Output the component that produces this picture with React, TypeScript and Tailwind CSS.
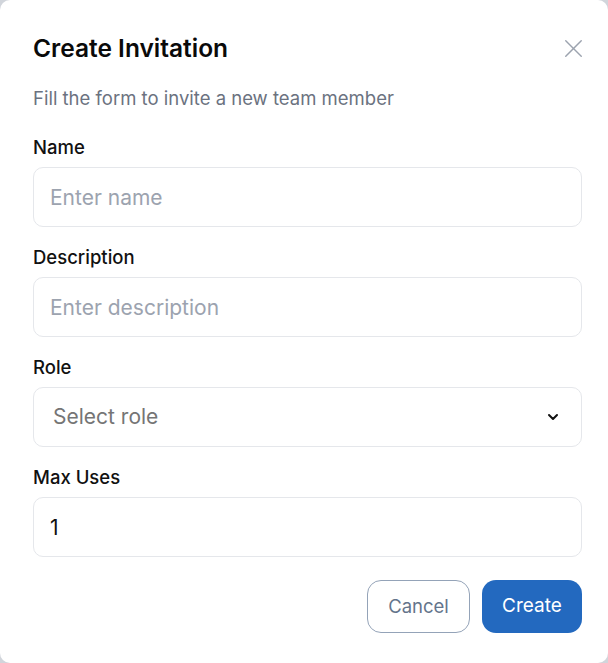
import { X, ChevronDown } from 'lucide-react'

function Field({ label, children }: { label: string; children: React.ReactNode }): React.JSX.Element {
  return (
    <div className="flex flex-col gap-[9px]">
      <label className="text-[18.5px] leading-[22px] font-medium text-[#111111]">{label}</label>
      {children}
    </div>
  )
}

const inputClass =
  "h-[60px] w-full rounded-[10px] border border-[#e5e7eb] bg-white px-[16px] text-[21px] text-[#111] placeholder:text-[#9ca3af] outline-none"

export default function App(): React.JSX.Element {
  return (
    <div className="min-h-[663px] w-[608px] bg-[#d1d5db]">
      <div className="h-[663px] rounded-[10px] bg-white pl-[33px] pr-[26px] pt-[34px] font-['Inter',sans-serif]">
        <div className="flex h-[28px] items-center justify-between">
          <h2 className="text-[24.5px] leading-[28px] font-semibold text-[#0a0a0a]">Create Invitation</h2>
          <button type="button" className="-mr-[7px] -my-[2px] text-[#9ca3af]">
            <X className="h-[31px] w-[31px]" strokeWidth={1.1} />
          </button>
        </div>
        <p className="mt-[24px] text-[18.5px] leading-[24px] text-[#6b7280]">Fill the form to invite a new team member</p>

        <div className="mt-[26px] flex flex-col gap-[19px]">
          <Field label="Name">
            <input className={inputClass} placeholder="Enter name" />
          </Field>
          <Field label="Description">
            <input className={inputClass} placeholder="Enter description" />
          </Field>
          <Field label="Role">
            <div className="flex h-[60px] w-full items-center justify-between rounded-[10px] border border-[#e5e7eb] bg-white pl-[19px] pr-[20px]">
              <span className="text-[21px] text-[#757575]">Select role</span>
              <ChevronDown className="h-[16px] w-[16px] text-[#111]" strokeWidth={3} />
            </div>
          </Field>
          <Field label="Max Uses">
            <input className={inputClass} defaultValue="1" />
          </Field>
        </div>

        <div className="mt-[23px] flex justify-end gap-[12px]">
          <button
            type="button"
            className="h-[53px] w-[103px] rounded-[14px] border border-[#94a3b8] bg-white text-[18.5px] text-[#64748b]"
          >
            Cancel
          </button>
          <button
            type="button"
            className="h-[53px] w-[100px] rounded-[14px] bg-[#2369bf] text-[19px] text-white"
          >
            Create
          </button>
        </div>
      </div>
    </div>
  )
}
